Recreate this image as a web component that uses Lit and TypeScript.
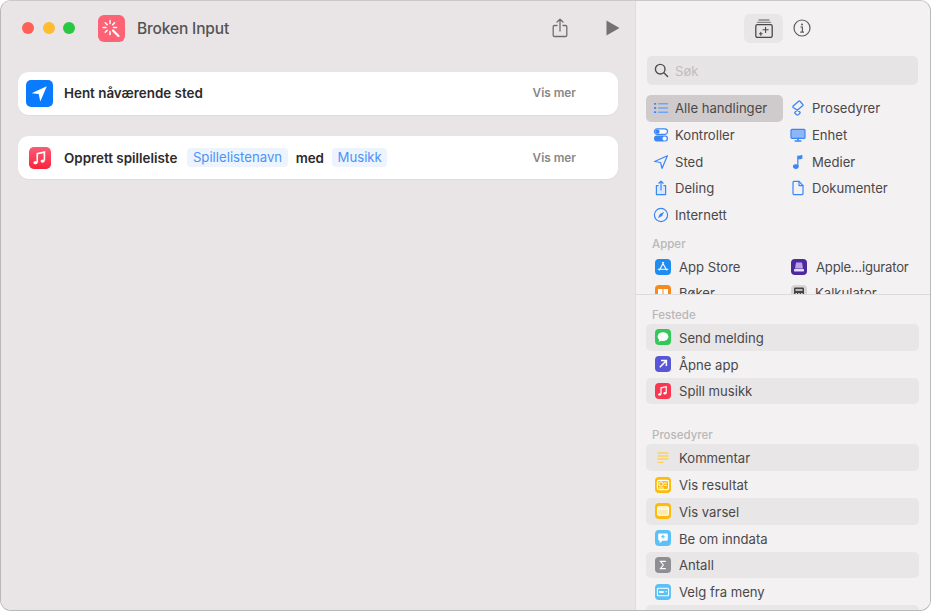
import { LitElement, html, css, svg } from 'lit';
import { customElement } from 'lit/decorators.js';

const BLUE = '#3b86f7';

const line = (d: unknown, size = 16) => html`<svg width=${size} height=${size} viewBox="0 0 16 16" fill="none" stroke=${BLUE} stroke-width="1.2" stroke-linecap="round" stroke-linejoin="round">${d}</svg>`;

const categoryIcons: Record<string, unknown> = {
  list: line(svg`<g stroke-width="1.4"><path d="M5.6 3.8h9M5.6 8h9M5.6 12.2h9" stroke="#6ea5f8"/><path d="M1.8 3.8h.6M1.8 8h.6M1.8 12.2h.6" stroke-width="1.8"/></g>`),
  toggles: line(svg`<rect x="1.5" y="1.8" width="13" height="5.6" rx="2.8" fill="#fff"/><circle cx="4.4" cy="4.6" r="2.2" fill=${BLUE} stroke="none"/><rect x="1" y="8.6" width="14" height="6" rx="3" fill=${BLUE} stroke="none"/><circle cx="11.6" cy="11.6" r="2.1" fill="#fff" stroke="none"/>`),
  location: line(svg`<path d="M14.4 1.8 1.6 7.5l6 1 1.4 5.9z"/>`),
  share: line(svg`<path d="M5.2 5.6H3.4v9h9.2v-9h-1.8" fill="#dbe8fc"/><path d="M8 10V1.2M5.8 3.2 8 1.2l2.2 2"/>`),
  compass: line(svg`<circle cx="8" cy="8" r="6.6"/><path d="M11.2 4.8 9.1 9.1 4.8 11.2l2.1-4.3z" fill=${BLUE} stroke="none"/>`),
  script: line(svg`<path d="M9 1 3.2 6q-.6.8 0 1.5l6.4 4.1q1 1 0 2l-1.4 1.2q-.8.6-1.6 0l-1.4-1.2q-.8-.8 0-1.6l7.4-6.2q.8-.8 0-1.6L10 1.3Q9.5.8 9 1z" stroke-width="1.3"/>`),
  display: line(svg`<rect x="1" y="2.4" width="14" height="9" rx="1" fill="#8db6f7" stroke=${BLUE}/><path d="M8 11.4v2.4M5.2 14h5.6" stroke-width="1.6"/>`),
  note: line(svg`<path d="M7.8 12.4V2.2c1.6.1 3.2-.2 4-.6v2.6c-1 .4-2.4.7-4 .7" fill=${BLUE}/><ellipse cx="5.8" cy="12.6" rx="2.3" ry="1.8" fill=${BLUE}/>`),
  doc: line(svg`<path d="M3 2.4c0-.6.4-1 1-1h5l4 4.2v8c0 .6-.4 1-1 1H4c-.6 0-1-.4-1-1z"/><path d="M9 1.4v4.2h4"/>`),
};

const tile = (bg: string, inner: unknown, size = 16, radius = 4) => html`<svg width=${size} height=${size} viewBox="0 0 16 16"><rect width="16" height="16" rx=${radius} fill=${bg}/>${inner}</svg>`;

const musicGlyph = svg`<path d="M6 11.2V4.8l5.2-1.1v6.2" fill="none" stroke="#fff" stroke-width="1.2"/><ellipse cx="4.7" cy="11.4" rx="1.5" ry="1.2" fill="#fff"/><ellipse cx="9.9" cy="10.2" rx="1.5" ry="1.2" fill="#fff"/>`;

const tiles: Record<string, unknown> = {
  appstore: tile('#1f8cf0', svg`<path d="M8.6 3.5 4.4 11M7.4 3.5l4.2 7.5M3.2 10.2h9.6" stroke="#fff" stroke-width="1.1" stroke-linecap="round" fill="none"/>`),
  configurator: tile('#4b2a9c', svg`<path d="M5 3.5h6l1 6H4z" fill="#b9a3ee"/><rect x="3" y="10" width="10" height="2.4" rx=".6" fill="#e4dbfa"/>`),
  books: tile('#f58a1f', svg`<path d="M3 4h4.5v8.5H3zM8.5 4H13v8.5H8.5z" fill="#fff"/>`),
  calculator: tile('#d6d4d5', svg`<rect x="3" y="2.5" width="10" height="11" rx="1" fill="#444"/><rect x="4.5" y="4" width="7" height="2" fill="#bbb"/><path d="M4.5 8h1.5v1.2H4.5zM7.2 8h1.5v1.2H7.2zM10 8h1.5v1.2H10z" fill="#ddd"/>`),
  message: tile('#34c759', svg`<ellipse cx="8" cy="7.6" rx="5.4" ry="4.4" fill="#fff"/><path d="M4.4 10.4 3.6 13l3-1.6z" fill="#fff"/>`),
  open: tile('#5856d6', svg`<path d="M4.8 11.2 11 5M6 4.6h5.4V10" stroke="#fff" stroke-width="1.5" fill="none"/>`),
  music: tile('#fb3650', musicGlyph),
  comment: svg`<svg width="16" height="16" viewBox="0 0 16 16"><path d="M2.5 3h11M2.5 6h11M2.5 9h11M2.5 12.4h6" stroke="#fcd25b" stroke-width="1.4"/></svg>`,
  result: tile('#fdbb0a', svg`<rect x="2.4" y="3.4" width="11.2" height="9.2" rx="1.6" fill="none" stroke="#fff" stroke-width="1.1"/><circle cx="6" cy="7" r="2.2" fill="none" stroke="#fff" stroke-width="1"/><path d="M9 6h3M9 8.4h3M4 11h5" stroke="#fff" stroke-width=".9"/>`),
  alert: tile('#fdbb0a', svg`<rect x="2.6" y="3.8" width="10.8" height="8.4" rx="1.2" fill="#ffe9ad" stroke="#fff" stroke-width="1.1"/><path d="M2.6 6h10.8" stroke="#fff" stroke-width="1.1"/>`),
  ask: tile('#5ac0f5', svg`<path d="M3.2 4.6c0-.8.5-1.2 1.2-1.2h7.2c.7 0 1.2.4 1.2 1.2v5c0 .8-.5 1.2-1.2 1.2H7.4l-2.8 2.4v-2.4c-.9 0-1.4-.4-1.4-1.2z" fill="#fff"/><path d="M8 5v3.6M6.2 6.8h3.6" stroke="#5ac0f5" stroke-width="1.1"/>`),
  count: tile('#8e8e93', svg`<path d="M10.8 4.4H5.4L8.4 8l-3 3.6h5.4" fill="none" stroke="#fff" stroke-width="1.1"/>`),
  menu: tile('#5ac0f5', svg`<rect x="2.4" y="4.2" width="11.2" height="7.6" rx="1" fill="none" stroke="#fff" stroke-width="1.1"/><path d="M4.2 8h4.4" stroke="#fff" stroke-width="2"/><path d="M10.2 7.2h2l-1 1.4z" fill="#fff"/>`),
};

const categories = [
  [
    ['Alle handlinger', 'list'],
    ['Kontroller', 'toggles'],
    ['Sted', 'location'],
    ['Deling', 'share'],
    ['Internett', 'compass'],
  ],
  [
    ['Prosedyrer', 'script'],
    ['Enhet', 'display'],
    ['Medier', 'note'],
    ['Dokumenter', 'doc'],
  ],
];

const apps = [
  ['App Store', 'appstore'],
  ['Apple…igurator', 'configurator'],
  ['Bøker', 'books'],
  ['Kalkulator', 'calculator'],
];

const pinned = [
  ['Send melding', 'message'],
  ['Åpne app', 'open'],
  ['Spill musikk', 'music'],
];

const scripting = [
  ['Kommentar', 'comment'],
  ['Vis resultat', 'result'],
  ['Vis varsel', 'alert'],
  ['Be om inndata', 'ask'],
  ['Antall', 'count'],
  ['Velg fra meny', 'menu'],
  ['', ''],
];

@customElement('app-root')
export class AppRoot extends LitElement {
  static styles = css`
    :host {
      display: block;
      width: 931px;
      height: 612px;
      background: #fff;
      font-family: 'Inter', 'Liberation Sans', sans-serif;
      overflow: hidden;
    }

    .window {
      display: flex;
      box-sizing: border-box;
      height: 611px;
      width: 931px;
      border: 1px solid #b9b9b9;
      border-top-color: #c9c9c9;
      border-radius: 11px;
      overflow: hidden;
    }

    .main {
      width: 634px;
      flex: none;
      background: #e9e5e6;
      border-right: 1px solid #dfdcdd;
    }

    .titlebar {
      display: flex;
      align-items: center;
      height: 54px;
      padding-right: 15px;
    }

    .lights {
      display: flex;
      gap: 8.5px;
      margin-left: 21px;
    }

    .lights span {
      width: 12px;
      height: 12px;
      border-radius: 50%;
    }

    .app-icon {
      margin-left: 23px;
      display: flex;
    }

    .title {
      margin-left: 12px;
      font-size: 15.5px;
      font-weight: 500;
      color: #555354;
      letter-spacing: -0.15px;
      flex: 1;
    }

    .titlebar .share {
      margin-right: 38px;
      display: flex;
    }

    .cards {
      display: flex;
      flex-direction: column;
      gap: 21px;
      padding: 17px 17px 0;
    }

    .card {
      display: flex;
      align-items: center;
      height: 43px;
      background: #fff;
      border-radius: 11px;
      box-shadow: 0 1px 1px rgba(0, 0, 0, 0.04);
      color: #2c2a2b;
      font-size: 13.4px;
      font-weight: 600;
    }

    .card:first-child span {
      position: relative;
      top: -0.5px;
    }

    .card:first-child .icon svg {
      margin-left: -1px;
    }

    .card .icon {
      width: 44px;
      display: flex;
      justify-content: center;
      flex: none;
      margin-right: 2px;
    }

    .card .pill {
      background: #edf4fe;
      color: #4b93f7;
      font-size: 13.2px;
      font-weight: 400;
      padding: 2px 5.5px;
      border-radius: 4px;
      margin: 0 8px;
      line-height: 15px;
    }

    .card .pill.first {
      margin-left: 10px;
    }

    .card .more {
      margin-left: auto;
      margin-right: 42px;
      font-size: 11.8px;
      color: #8a8889;
    }

    .side {
      flex: 1;
      min-width: 0;
      background: #f3f1f2;
      display: flex;
      flex-direction: column;
      color: #4a4849;
      font-size: 13.1px;
    }

    .tools {
      display: flex;
      align-items: center;
      height: 29px;
      margin: 13px 0 13px 108px;
      gap: 10px;
    }

    .tools .active {
      width: 39px;
      height: 29px;
      background: #e8e6e7;
      border-radius: 6px;
      display: flex;
      align-items: center;
      justify-content: center;
    }

    .tools .info {
      margin-top: -2px;
    }

    .library {
      height: 238px;
      overflow: hidden;
      border-bottom: 1px solid #dcdadb;
      flex: none;
    }

    .search {
      display: flex;
      align-items: center;
      gap: 6px;
      height: 29px;
      margin: 0 12px 0 11px;
      padding-left: 7px;
      background: #e7e4e5;
      border-radius: 5px;
      color: #bfbdbe;
    }

    .cats {
      display: grid;
      grid-template-columns: 137px 1fr;
      margin: 10px 12px 0 10px;
    }

    .cat {
      display: flex;
      align-items: center;
      height: 26.7px;
      gap: 6px;
      padding-left: 7px;
      border-radius: 5px;
    }

    .cat.on {
      background: #cfcbcc;
    }

    .group {
      font-size: 11.5px;
      font-weight: 500;
      color: #b9b7b8;
      margin-left: 16px;
    }

    .library .group {
      margin-top: 9px;
      margin-bottom: 2px;
      line-height: 14px;
    }

    .apps {
      display: grid;
      grid-template-columns: 136px 1fr;
      margin-left: 19px;
      grid-auto-rows: 26.5px;
    }

    .app {
      display: flex;
      align-items: center;
      gap: 8px;
      white-space: nowrap;
    }

    .app:nth-child(2) span {
      margin-left: 1px;
      letter-spacing: -0.2px;
    }

    .pinned {
      flex: 1;
      min-height: 0;
      overflow: hidden;
      padding-top: 13px;
    }

    .pinned .group {
      line-height: 14px;
      margin-bottom: 2px;
    }

    .pinned .group + .rows + .group {
      margin-top: 24px;
    }

    .rows {
      margin: 0 11px 0 10px;
    }

    .row {
      display: flex;
      align-items: center;
      gap: 8px;
      height: 26.8px;
      padding-left: 9px;
      border-radius: 5px;
    }

    .row span {
      padding-top: 1px;
    }

    .row:nth-child(odd) {
      background: #e9e6e7;
    }

    svg {
      flex: none;
      display: block;
    }
  `;

  private renderCategory([name, icon]: string[]) {
    return html`<div class="cat ${name === 'Alle handlinger' ? 'on' : ''}">
      ${categoryIcons[icon]}<span>${name}</span>
    </div>`;
  }

  private renderRow([name, icon]: string[]) {
    return html`<div class="row">${tiles[icon]}<span>${name}</span></div>`;
  }

  render() {
    return html`
      <div class="window">
        <div class="main">
          <div class="titlebar">
            <div class="lights">
              <span style="background:#fe5f57"></span>
              <span style="background:#febc2e"></span>
              <span style="background:#28c840"></span>
            </div>
            <div class="app-icon">
              <svg width="27" height="27" viewBox="0 0 27 27">
                <rect width="27" height="27" rx="6" fill="#fd6275"/>
                <g stroke="#fff" stroke-width="1.5" stroke-linecap="round">
                  <path d="M12 5.5v3M12 16.5v3M5 12.5h3M15.5 12.5h3M7.2 7.8l2 2M16.6 7.8l-2 2M7.2 17.2l2-2"/>
                  <path d="M15 15.5l5.5 5.5" stroke-width="2.2"/>
                </g>
              </svg>
            </div>
            <div class="title">Broken Input</div>
            <div class="share">
              <svg width="16" height="20" viewBox="0 0 16 20" fill="none" stroke="#6f6d6e" stroke-width="1.3" stroke-linecap="round" stroke-linejoin="round">
                <path d="M5 7.5H2.4c-.8 0-1.2.4-1.2 1.2v8.6c0 .8.4 1.2 1.2 1.2h11.2c.8 0 1.2-.4 1.2-1.2V8.7c0-.8-.4-1.2-1.2-1.2H11"/>
                <path d="M8 13V1.2M5 4l3-2.8L11 4"/>
              </svg>
            </div>
            <svg width="14" height="16" viewBox="0 0 14 16"><path d="M.5.5 13.5 8 .5 15.5z" fill="#737172"/></svg>
          </div>
          <div class="cards">
            <div class="card">
              <div class="icon">
                <svg width="27" height="27" viewBox="0 0 27 27">
                  <rect width="27" height="27" rx="5" fill="#0a7aff"/>
                  <path d="M20.8 6.2 5.6 13.2l7.1.9 1.6 7.4z" fill="#fff"/>
                </svg>
              </div>
              <span>Hent nåværende sted</span>
              <span class="more">Vis mer</span>
            </div>
            <div class="card">
              <div class="icon">
                <svg width="22" height="22" viewBox="0 0 16 16">
                  <defs><linearGradient id="mg" x1="0" y1="0" x2="0" y2="1"><stop offset="0" stop-color="#fb5c74"/><stop offset="1" stop-color="#fa233b"/></linearGradient></defs>
                  <rect width="16" height="16" rx="3.5" fill="url(#mg)"/>
                  ${musicGlyph}
                </svg>
              </div>
              <span>Opprett spilleliste</span>
              <span class="pill first">Spillelistenavn</span>
              <span>med</span>
              <span class="pill">Musikk</span>
              <span class="more">Vis mer</span>
            </div>
          </div>
        </div>
        <div class="side">
          <div class="tools">
            <div class="active">
              <svg width="18" height="19" viewBox="0 0 18 19" fill="none" stroke="#4a4849" stroke-width="1.3" stroke-linecap="round">
                <path d="M4 1h10M2.5 3.4h13" stroke="#8a8889"/>
                <rect x=".8" y="5.6" width="16.4" height="12.8" rx="1.6"/>
                <path d="M10.6 8.2v5.2M8 10.8h5.2M5.8 13.4v2.8M4.4 14.8h2.8" stroke-width="1.1"/>
              </svg>
            </div>
            <svg class="info" width="18" height="18" viewBox="0 0 18 18" fill="none">
              <circle cx="9" cy="9" r="8" stroke="#5d5b5c" stroke-width="1.2"/>
              <circle cx="9" cy="5.4" r="1" fill="#5d5b5c"/>
              <path d="M7.4 8h2v5M7.2 13.2h3.8" stroke="#5d5b5c" stroke-width="1.2"/>
            </svg>
          </div>
          <div class="library">
            <div class="search">
              <svg width="15" height="15" viewBox="0 0 15 15" fill="none" stroke="#4f4d4e" stroke-width="1.4" stroke-linecap="round">
                <circle cx="6.2" cy="6.2" r="4.8"/><path d="M9.8 9.8 13.6 13.6"/>
              </svg>
              <span>Søk</span>
            </div>
            <div class="cats">
              ${categories.map((col) => html`<div>${col.map((c) => this.renderCategory(c))}</div>`)}
            </div>
            <div class="group">Apper</div>
            <div class="apps">
              ${apps.map(([name, icon]) => html`<div class="app">${tiles[icon]}<span>${name}</span></div>`)}
            </div>
          </div>
          <div class="pinned">
            <div class="group">Festede</div>
            <div class="rows">${pinned.map((r) => this.renderRow(r))}</div>
            <div class="group">Prosedyrer</div>
            <div class="rows">${scripting.map((r) => this.renderRow(r))}</div>
          </div>
        </div>
      </div>
    `;
  }
}
